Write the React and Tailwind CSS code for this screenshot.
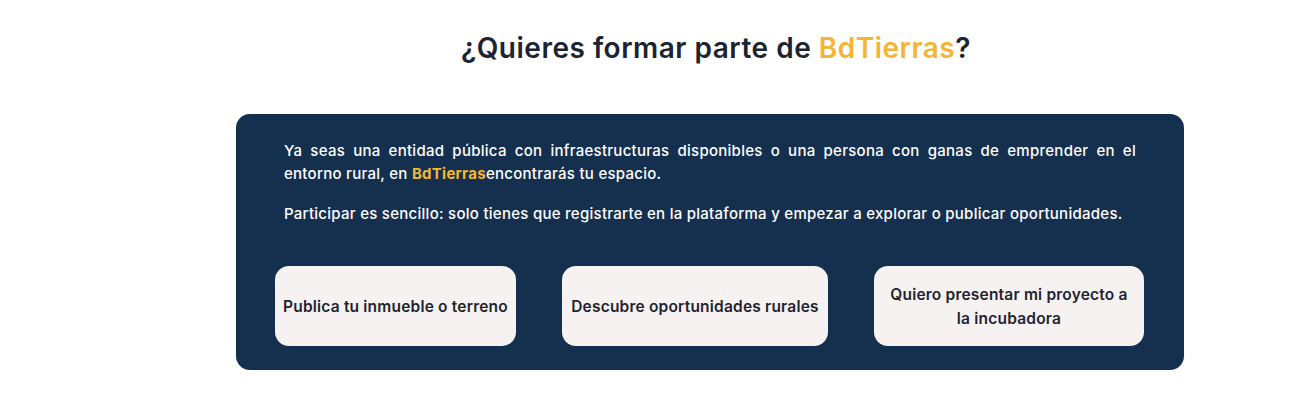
import React from "react";

const App = () => {
  const actions = [
    { label: "Publica tu inmueble o terreno", width: "w-[241px]" },
    { label: "Descubre oportunidades rurales", width: "w-[266px]" },
    { label: "Quiero presentar mi proyecto a la incubadora", width: "w-[270px]" },
  ];

  return (
    <div className="min-h-screen bg-white font-['Inter',sans-serif]">
      <div className="ml-[236px] w-[948px] pt-[30px]">
        {/* Heading */}
        <h2 className="text-center text-[28px] leading-[36px] font-semibold text-[#1c2331] pl-[12px] tracking-[0.5px]">
          ¿Quieres formar parte de <span className="text-[#f5b533]">BdTierras</span>?
        </h2>

        {/* Panel */}
        <div className="mt-[48px] bg-[#15304f] rounded-[14px] pt-[25px] pb-[24px]">
          <div className="px-[48px] text-white text-[15px] leading-[23px] font-medium tracking-[0.27px]">
            <p className="text-justify">
              Ya seas una entidad pública con infraestructuras disponibles o una persona con ganas de emprender en el
              entorno rural, en <span className="text-[#f5b533] font-bold">BdTierras</span>encontrarás tu espacio.
            </p>
            <p className="mt-[17px]">
              Participar es sencillo: solo tienes que registrarte en la plataforma y empezar a explorar o publicar
              oportunidades.
            </p>
          </div>

          {/* Buttons */}
          <div className="mt-[41px] ml-[39px] flex gap-[46px]">
            {actions.map((a) => (
              <button
                key={a.label}
                className={`${a.width} h-[80px] bg-[#f6f2f1] rounded-[14px] px-[6px] pt-[2px] text-[15.5px] leading-[24px] font-semibold text-[#1f2430] text-center tracking-[0.2px]`}
              >
                {a.label === "Quiero presentar mi proyecto a la incubadora" ? (
                  <>
                    Quiero presentar mi proyecto a<br />la incubadora
                  </>
                ) : (
                  a.label
                )}
              </button>
            ))}
          </div>
        </div>
      </div>
    </div>
  );
};

export default App;
